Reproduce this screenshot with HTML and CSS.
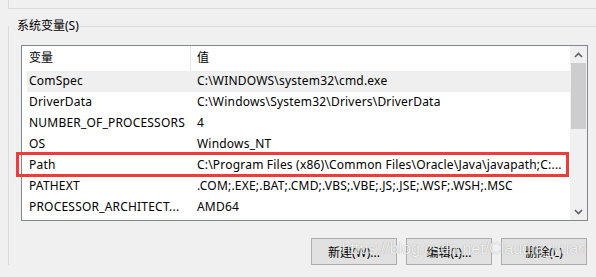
FILE: index.html
```html
<!DOCTYPE html>
<html lang="zh-CN">
<head>
    <meta charset="UTF-8">
    <title>环境变量</title>
    <link rel="stylesheet" href="styles.css">
</head>
<body>
    <div class="prev-group"></div>

    <fieldset class="group">
        <legend>系统变量(S)</legend>
        <div class="group-body">
            <div class="listview">
                <div class="list-body">
                    <div class="list-header">
                        <div class="col-name">变量</div>
                        <div class="col-value">值</div>
                    </div>
                    <div class="row selected">
                        <div class="cell-name">ComSpec</div>
                        <div class="cell-value">C:\WINDOWS\system32\cmd.exe</div>
                    </div>
                    <div class="row">
                        <div class="cell-name">DriverData</div>
                        <div class="cell-value">C:\Windows\System32\Drivers\DriverData</div>
                    </div>
                    <div class="row">
                        <div class="cell-name">NUMBER_OF_PROCESSORS</div>
                        <div class="cell-value">4</div>
                    </div>
                    <div class="row">
                        <div class="cell-name">OS</div>
                        <div class="cell-value">Windows_NT</div>
                    </div>
                    <div class="row">
                        <div class="cell-name">Path</div>
                        <div class="cell-value">C:\Program Files (x86)\Common Files\Oracle\Java\javapath;C:...</div>
                    </div>
                    <div class="row">
                        <div class="cell-name">PATHEXT</div>
                        <div class="cell-value">.COM;.EXE;.BAT;.CMD;.VBS;.VBE;.JS;.JSE;.WSF;.WSH;.MSC</div>
                    </div>
                    <div class="row">
                        <div class="cell-name">PROCESSOR_ARCHITECT...</div>
                        <div class="cell-value">AMD64</div>
                    </div>
                </div>

                <div class="scrollbar">
                    <div class="scroll-btn">
                        <svg width="9" height="6" viewBox="0 0 9 6"><polyline points="1,5 4.5,1.5 8,5" fill="none" stroke="#606060" stroke-width="1.6"/></svg>
                    </div>
                    <div class="scroll-track">
                        <div class="scroll-thumb"></div>
                    </div>
                    <div class="scroll-btn">
                        <svg width="9" height="6" viewBox="0 0 9 6"><polyline points="1,1 4.5,4.5 8,1" fill="none" stroke="#606060" stroke-width="1.6"/></svg>
                    </div>
                </div>

                <!-- red marker drawn over the Path row -->
                <div class="mark"></div>
            </div>

            <div class="buttons">
                <button type="button">新建(W)...</button>
                <button type="button">编辑(I)...</button>
                <button type="button">删除(L)</button>
            </div>
        </div>
    </fieldset>

    <div class="watermark">https://blog.csdn.net/Claudia_yuan</div>
</body>
</html>
```

FILE: styles.css
```css
body {
    margin: 0;
    padding: 0;
    background: #f0f0f0;
    font-family: "Noto Sans", "Noto Sans CJK SC", sans-serif;
    font-size: 12px;
    color: #000;
    overflow: hidden;
    position: relative;
    height: 277px;
}

.prev-group {
    margin-left: 8px;
    height: 9px;
    box-sizing: border-box;
    border-left: 1px solid #dcdcdc;
    border-bottom: 1px solid #dcdcdc;
}

.group {
    margin: 8px -20px 0 8px;
    padding: 0;
    border: 1px solid #dcdcdc;
    border-right: none;
    border-bottom: none;
    min-width: 0;
}

.group legend {
    padding: 0 1px 0 8px;
    line-height: 18px;
    font-size: 12px;
}

.group-body {
    padding: 10px 0 0 12px;
}

.listview {
    position: relative;
    width: 567px;
    height: 176px;
    box-sizing: border-box;
    border: 1px solid #828790;
    background: #fff;
    display: flex;
}

.list-body {
    flex: 1;
    overflow: hidden;
}

.list-header {
    display: grid;
    grid-template-columns: 169px 1fr;
    height: 25px;
    line-height: 23px;
}

.list-header .col-name {
    padding-left: 7px;
    border-right: 1px solid #e5e5e5;
}

.list-header .col-value {
    padding-left: 6px;
}

.row {
    display: grid;
    grid-template-columns: 164px 1fr;
    margin-left: 5px;
    height: 21px;
    line-height: 20px;
    white-space: nowrap;
    letter-spacing: 0.2px;
}

.row.selected {
    background: #efefef;
}

.cell-name {
    padding-left: 2px;
    overflow: hidden;
}

.cell-value {
    padding-left: 6px;
    overflow: hidden;
}

.scrollbar {
    width: 17px;
    background: #f0f0f0;
    display: flex;
    flex-direction: column;
}

.scroll-btn {
    height: 17px;
    display: flex;
    align-items: center;
    justify-content: center;
}

.scroll-track {
    flex: 1;
    padding: 0 1px;
}

.scroll-thumb {
    height: 66px;
    background: #cdcdcd;
}

.mark {
    position: absolute;
    left: -6px;
    top: 106px;
    width: 553px;
    height: 25px;
    box-sizing: border-box;
    border: 3px solid #ee3b3b;
}

.buttons {
    display: flex;
    justify-content: flex-end;
    gap: 9px;
    width: 566px;
    margin-top: 17px;
}

.buttons button {
    width: 86px;
    height: 27px;
    background: #e1e1e1;
    border: 1px solid #adadad;
    font-family: "Noto Sans", "Noto Sans CJK SC", sans-serif;
    font-size: 12px;
    color: #000;
    padding: 0;
}

.watermark {
    position: absolute;
    right: 9px;
    top: 240px;
    font-family: "Liberation Sans", sans-serif;
    font-size: 16px;
    color: rgba(255, 255, 255, 0.85);
    text-shadow: 0 0 1px rgba(0, 0, 0, 0.35);
}
```
